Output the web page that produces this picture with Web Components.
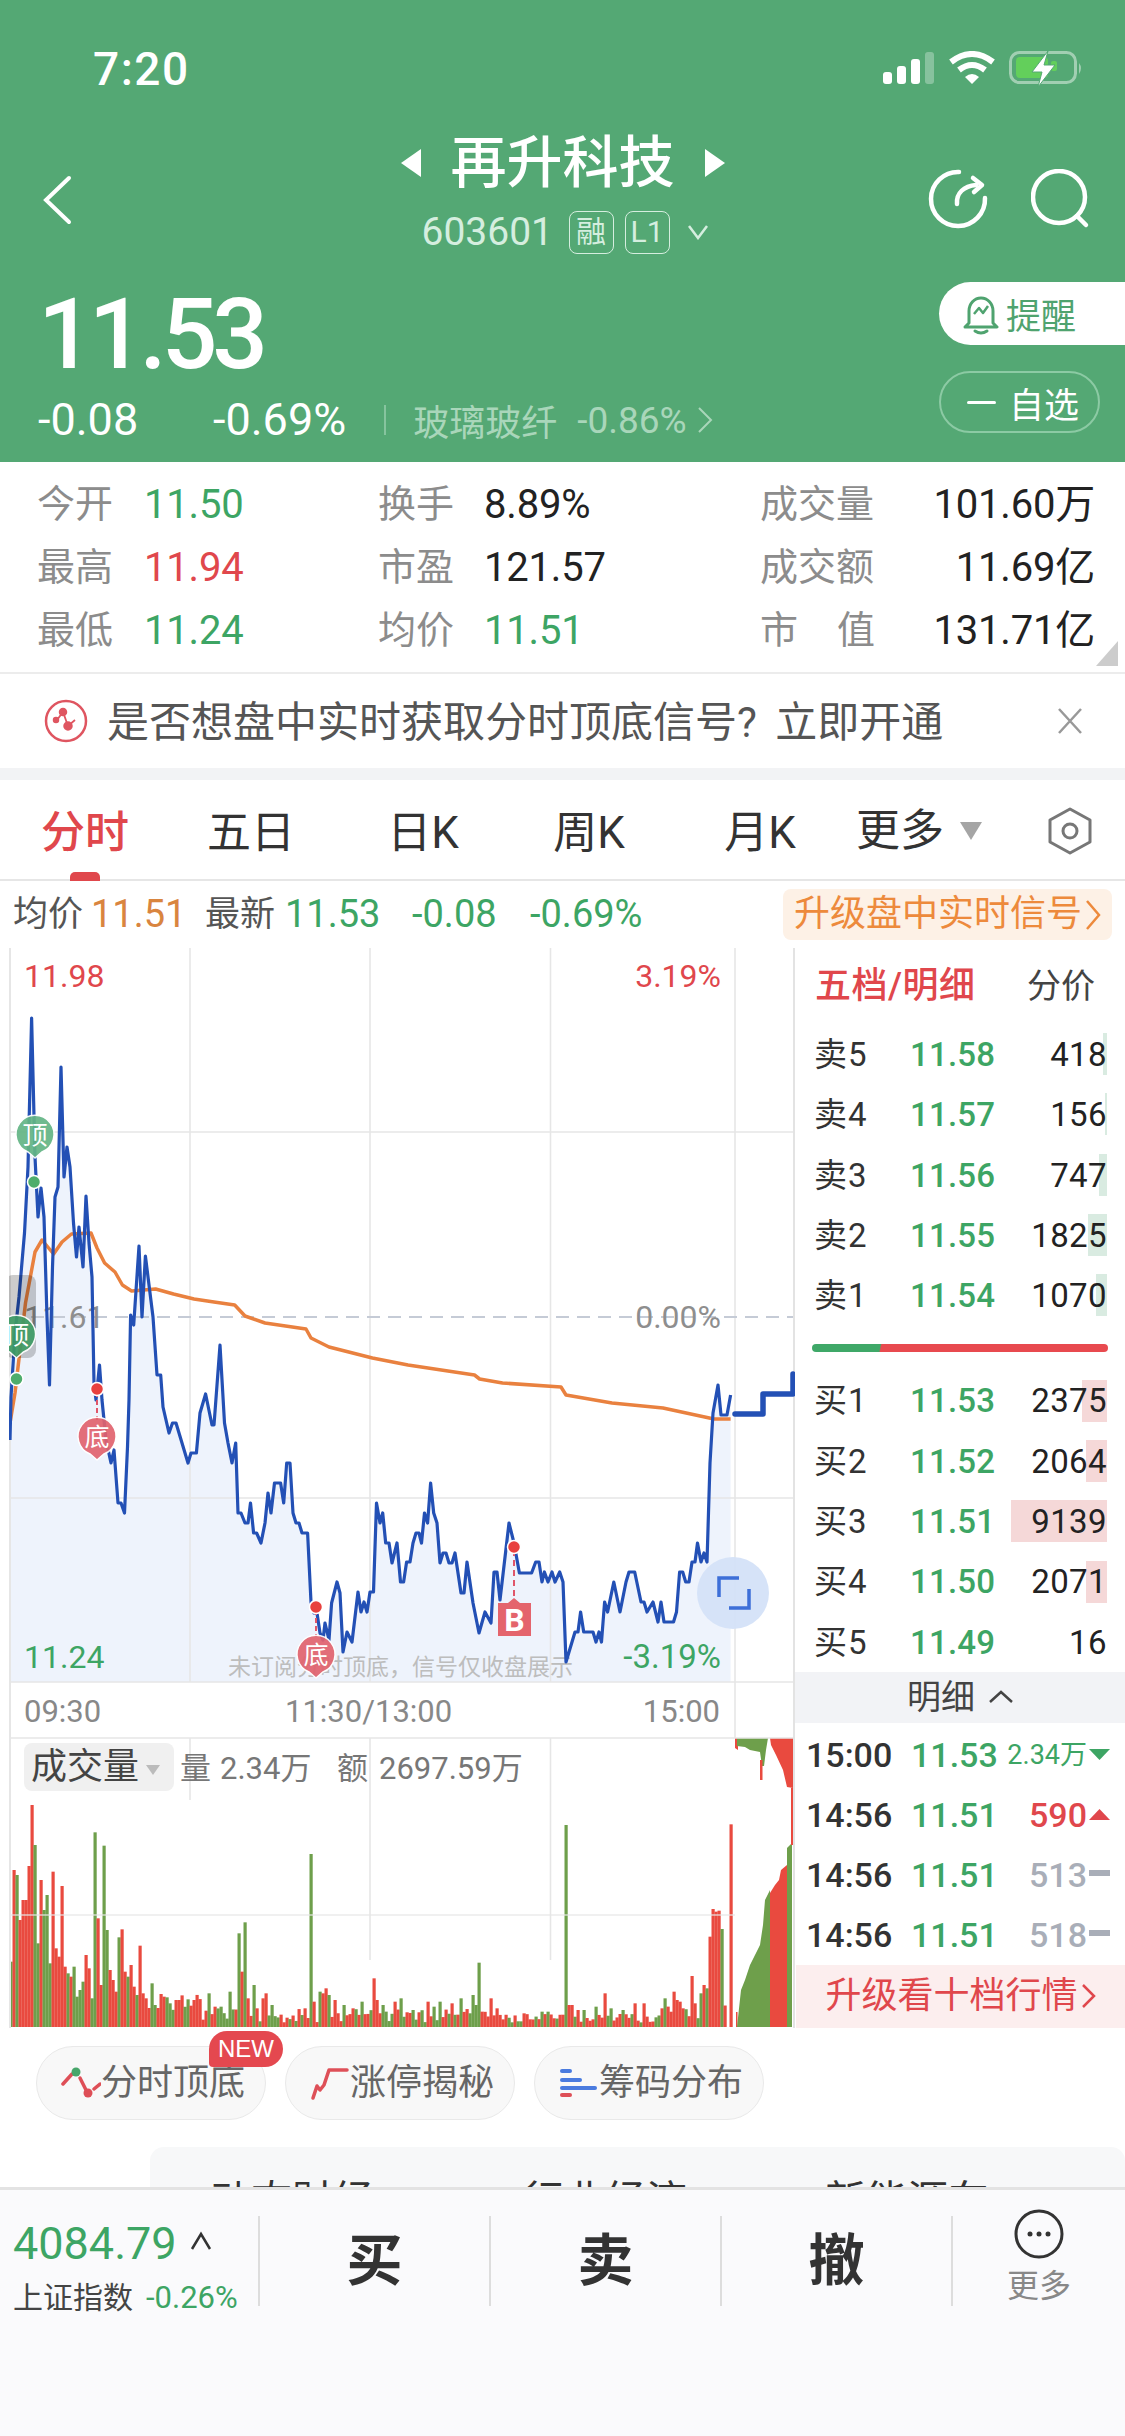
<!DOCTYPE html>
<html lang="zh">
<head>
<meta charset="utf-8">
<title>再升科技</title>
<style>
html,body{margin:0;padding:0;background:#fff}
body{width:1125px;height:2436px;overflow:hidden;display:flex;flex-direction:column;font-family:Roboto,"Noto Sans CJK SC",sans-serif;color:#333}
sl-scroll{flex:1 1 auto;min-height:0}
</style>
</head>
<body>
<sl-scroll>
  <sl-header></sl-header>
  <sl-stats>
    <sl-stat label="今开" value="11.50" tone="g"></sl-stat>
    <sl-stat label="换手" value="8.89%" gap="30"></sl-stat>
    <sl-stat label="成交量" value="101.60万" end></sl-stat>
    <sl-stat label="最高" value="11.94" tone="r"></sl-stat>
    <sl-stat label="市盈" value="121.57" gap="30"></sl-stat>
    <sl-stat label="成交额" value="11.69亿" end></sl-stat>
    <sl-stat label="最低" value="11.24" tone="g"></sl-stat>
    <sl-stat label="均价" value="11.51" tone="g" gap="30"></sl-stat>
    <sl-stat label="市 值" value="131.71亿" end spread></sl-stat>
  </sl-stats>
  <sl-notice>是否想盘中实时获取分时顶底信号? 立即开通</sl-notice>
  <sl-tabs></sl-tabs>
  <sl-info></sl-info>
  <sl-main>
    <sl-chart slot="chart"></sl-chart>
    <sl-book slot="book"></sl-book>
  </sl-main>
  <sl-chips>
    <sl-chip icon="signal" new>分时顶底</sl-chip>
    <sl-chip icon="limit">涨停揭秘</sl-chip>
    <sl-chip icon="chips">筹码分布</sl-chip>
  </sl-chips>
  <sl-card>
    <span>动态财经</span><span>行业经济</span><span style="margin-left:-11px">新能源车</span>
  </sl-card>
</sl-scroll>
<sl-bar></sl-bar>

<script>
const FONT = 'Roboto,"Noto Sans CJK SC",sans-serif';
class Base extends HTMLElement {
  constructor(){ super(); this.attachShadow({mode:'open'}); }
  connectedCallback(){ this.shadowRoot.innerHTML = this.render(); }
}
const G='#3DA564', R='#E0474C';

customElements.define('sl-scroll', class extends Base {
  render(){ return `<style>:host{display:block;overflow:hidden;height:2187px}</style><slot></slot>`; }
});

customElements.define('sl-header', class extends Base {
  render(){ return `<style>
  :host{display:block;height:462px;background:#54A874;color:#fff;box-sizing:border-box;overflow:hidden}
  .status{height:62px;padding-top:38px;display:flex;align-items:center;justify-content:space-between;padding-left:93px;padding-right:42px}
  .time{font-size:46px;font-weight:500;letter-spacing:1.5px;line-height:62px}
  .sicons{display:block}
  .nav{height:145px;margin-top:25px;display:grid;grid-template-columns:1fr auto 1fr}
  .back{padding:50px 0 0 42px}
  .mid{display:flex;flex-direction:column;align-items:center}
  .title{display:flex;align-items:center;gap:30px;height:64px;margin-top:6px;font-size:56px;font-weight:500;line-height:64px}
  .sub{display:flex;align-items:center;height:44px;margin-top:15px;margin-left:5px;color:#D5EEDF;font-size:39px}
  .badge{box-sizing:border-box;height:43px;width:45px;border:1.5px solid #D5EEDF;border-radius:8px;display:flex;align-items:center;justify-content:center;font-size:30px;line-height:1}
  .right{display:flex;justify-content:flex-end;gap:42px;padding:44px 30px 0 0}
  .low{display:flex;justify-content:space-between;margin-top:0}
  .q{padding-left:38px}
  .price{font-size:98px;font-weight:500;line-height:88px;letter-spacing:-5px;height:88px;margin-top:21px}
  .ch{display:flex;align-items:center;height:44px;margin-top:19px}
  .ch b{font-weight:400;font-size:45px;line-height:44px}
  .ind{color:#A9D6BA;font-size:36px;display:flex;align-items:center;white-space:nowrap}
  .sep{width:2px;height:30px;background:#86C49E;margin:0 27px 0 38px}
  .acts{display:flex;flex-direction:column;align-items:flex-end;gap:26px;padding-top:12px}
  .remind{width:186px;height:63px;background:#fff;border-radius:32px 0 0 32px;color:#4FA36F;font-size:35px;display:flex;align-items:center;padding-left:24px;box-sizing:border-box;gap:7px}
  .star{box-sizing:border-box;width:161px;height:62px;margin-right:25px;border:2px solid #8CCAA4;border-radius:31px;display:flex;align-items:center;padding-left:26px;gap:13px;font-size:35px}
  .star i{display:block;width:29px;height:3px;background:#fff;border-radius:2px}
  </style>
  <div class="status">
    <span class="time">7:20</span>
    <svg class="sicons" width="200" height="36" viewBox="0 0 200 36">
      <g fill="#fff"><rect x="0" y="21" width="9" height="12" rx="3"/><rect x="14" y="15" width="9" height="18" rx="3"/><rect x="28" y="8" width="9" height="25" rx="3"/></g>
      <rect x="42" y="1" width="9" height="32" rx="3" fill="#fff" opacity=".3"/>
      <g fill="none" stroke="#fff" stroke-width="6"><path d="M68 11 Q89 -5 110 11"/><path d="M76 19 Q89 9 102 19"/></g>
      <path d="M82 26 Q89 20 96 26 L89 33Z" fill="#fff"/>
      <rect x="127.500" y="1.500" width="65" height="30" rx="9" fill="none" stroke="#fff" stroke-opacity=".45" stroke-width="3"/>
      <rect x="133" y="6" width="32" height="21" rx="4" fill="#63CF5B"/>
      <rect x="168" y="10" width="6" height="10" rx="2" fill="#63CF5B"/>
      <path d="M196 12 Q200 17 196 23Z" fill="#fff" opacity=".45"/>
      <path d="M165 0 L149 21 H159 L155 36 L172 14 H161Z" fill="#fff" stroke="#54A874" stroke-width="1"/>
    </svg>
  </div>
  <div class="nav">
    <div class="back"><svg width="32" height="50" viewBox="0 0 32 50"><path d="M27 3 L4 25 L27 47" fill="none" stroke="#fff" stroke-width="4" stroke-linecap="round"/></svg></div>
    <div class="mid">
      <div class="title">
        <svg width="20" height="28" viewBox="0 0 20 28"><path d="M20 0 V28 L0 14Z" fill="#fff"/></svg>
        <span>再升科技</span>
        <svg width="20" height="28" viewBox="0 0 20 28"><path d="M0 0 V28 L20 14Z" fill="#fff"/></svg>
      </div>
      <div class="sub">
        <span style="width:147px">603601</span>
        <span class="badge">融</span>
        <span class="badge" style="margin-left:11px">L1</span>
        <svg width="22" height="16" viewBox="0 0 22 16" style="margin-left:17px"><path d="M2 2 L11 14 L20 2" fill="none" stroke="#D5EEDF" stroke-width="2.500"/></svg>
      </div>
    </div>
    <div class="right">
      <svg width="62" height="62" viewBox="0 0 62 62" fill="none" stroke="#fff" stroke-width="4.500" stroke-linecap="round" stroke-linejoin="round"><path d="M32 3 A27 27 0 1 0 58 29"/><path d="M30 35 C29 24 37 17 49 16"/><path d="M46 9 L55 16 L47 23"/></svg>
      <svg width="64" height="64" viewBox="0 0 64 64" fill="none" stroke="#fff" stroke-width="4.500" stroke-linecap="round"><circle cx="28" cy="28" r="26"/><path d="M46 47 L55 56"/></svg>
    </div>
  </div>
  <div class="low">
    <div class="q">
      <div class="price">11.53</div>
      <div class="ch"><b style="width:175px">-0.08</b><b>-0.69%</b><span class="sep"></span><span class="ind">玻璃玻纤<span style="margin-left:20px;font-size:37px">-0.86%</span>
        <svg width="16" height="28" viewBox="0 0 16 28" style="margin-left:10px"><path d="M2 2 L14 14 L2 26" fill="none" stroke="#A9D6BA" stroke-width="2"/></svg></span></div>
    </div>
    <div class="acts">
      <div class="remind">
        <svg width="36" height="42" viewBox="0 0 36 42" fill="none" stroke="#4FA36F" stroke-width="3" stroke-linejoin="round"><path d="M6 30 V18 A12 13 0 0 1 30 18 V30 L34 34 H2Z"/><path d="M11 21 L16 15 L20 20 L25 13" stroke-width="2.500"/><path d="M12 38 Q18 42 24 38" stroke-linecap="round"/></svg>
        <span>提醒</span>
      </div>
      <div class="star"><i></i><span>自选</span></div>
    </div>
  </div>`; }
});

customElements.define('sl-stats', class extends Base {
  render(){ return `<style>
  :host{display:grid;position:relative;box-sizing:border-box;height:212px;padding:11px 30px 10px 37px;grid-template-columns:341px 382px 1fr;grid-auto-rows:63px;border-bottom:2px solid #ececec;align-items:center}
  :host::after{content:"";position:absolute;right:7px;bottom:6px;width:22px;height:25px;background:#ccc;clip-path:polygon(100% 0,100% 100%,0 100%)}
  </style><slot></slot>`; }
});
customElements.define('sl-stat', class extends Base {
  render(){
    const tone={g:G,r:R}[this.getAttribute('tone')]||'#222';
    const gap=this.getAttribute('gap')||31;
    const end=this.hasAttribute('end');
    const l=this.getAttribute('label');
    const labelHtml=this.hasAttribute('spread')
      ? `<span style="display:flex;justify-content:space-between;width:115px"><span>市</span><span>值</span></span>`
      : `<span>${l}</span>`;
    return `<style>
    :host{display:flex;align-items:center;height:63px;justify-content:${end?'space-between':'flex-start'}}
    .l{color:#8C8C8C;font-size:38px;line-height:63px;margin-right:${end?0:gap}px}
    .v{color:${tone};font-size:40px;line-height:63px;letter-spacing:-.2px}
    </style><span class="l">${labelHtml}</span><span class="v">${this.getAttribute('value')}</span>`; }
});

customElements.define('sl-notice', class extends Base {
  render(){ return `<style>
  :host{display:flex;align-items:center;height:94px;padding:0 42px 0 44px;background:#fff;border-bottom:12px solid #F2F3F5;font-size:42px;color:#555;word-spacing:8px}
  .t{flex:1;margin-left:19px;line-height:94px;white-space:nowrap;padding-top:4px}
  </style>
  <svg width="44" height="44" viewBox="0 0 44 44" fill="none" stroke="#DF5560" stroke-width="2.500"><circle cx="22" cy="22" r="20"/><path d="M13 21 L19 13 L24 27 L31 21" stroke-width="1.800"/><circle cx="19" cy="13" r="3" fill="#DF5560"/><circle cx="24" cy="27" r="3.500" fill="#DF5560"/><circle cx="12" cy="21" r="2" fill="#DF5560"/></svg>
  <span class="t"><slot></slot></span>
  <svg width="26" height="28" viewBox="0 0 26 28"><path d="M2 2 L24 26 M24 2 L2 26" stroke="#999" stroke-width="2.500" fill="none"/></svg>`; }
});

customElements.define('sl-tabs', class extends Base {
  render(){
    const tab=(t,on)=>`<div class="${on?'tab on':'tab'}">${t}</div>`;
    return `<style>
    :host{display:grid;position:relative;grid-template-columns:170px 162px 182px 150px 192px 152px 1fr;height:99px;border-bottom:2px solid #E6E6E6;align-items:center;font-size:44px;color:#333}
    .tab{text-align:center;line-height:102px;height:99px;position:relative}
    .on{color:${R};font-weight:500}
    .on::after{content:"";position:absolute;left:70px;bottom:0;width:30px;height:9px;background:${R};border-radius:5px 5px 0 0}
    .more{display:flex;align-items:center;gap:16px;white-space:nowrap;line-height:102px}
    </style>
    ${tab('分时',1)}${tab('五日')}${tab('日K')}${tab('周K')}${tab('月K')}
    <div class="more"><span>更多</span><svg width="22" height="18" viewBox="0 0 22 18"><path d="M0 0 H22 L11 18Z" fill="#A5A5A5"/></svg></div>
    <div style="display:flex;justify-content:center;padding-left:6px"><svg width="46" height="48" viewBox="0 0 46 48" fill="none" stroke="#777" stroke-width="3"><path d="M23 2 L43 13 V35 L23 46 L3 35 V13Z" stroke-linejoin="round"/><circle cx="23" cy="24" r="7"/></svg></div>`; }
});

customElements.define('sl-info', class extends Base {
  render(){ return `<style>
  :host{display:flex;align-items:center;height:67px;padding-left:13px;box-sizing:border-box;font-size:35px;line-height:73px;color:#555;white-space:nowrap}
  .btn{margin-left:auto;margin-right:13px;width:329px;height:51px;background:#FDF1E6;border-radius:8px;color:#ED8A3C;display:flex;align-items:center;justify-content:center;gap:3px;font-size:36px;line-height:51px}
  span{display:inline-block}
  .n{font-size:38px}
  </style>
  <span style="width:78px">均价</span><span class="n" style="color:#D9853F;width:114px">11.51</span>
  <span style="width:80px">最新</span><span class="n" style="color:${G};width:127px">11.53</span>
  <span class="n" style="color:${G};width:118px">-0.08</span><span class="n" style="color:${G}">-0.69%</span>
  <div class="btn"><span>升级盘中实时信号</span><svg width="16" height="32" viewBox="0 0 16 32"><path d="M2 2 L14 16 L2 30" fill="none" stroke="#ED8A3C" stroke-width="2.500"/></svg></div>`; }
});

customElements.define('sl-main', class extends Base {
  render(){ return `<style>:host{display:grid;grid-template-columns:786px 330px;padding-left:9px;height:1080px}</style><slot name="chart"></slot><slot name="book"></slot>`; }
});

const PRICE=[[10,1440],[11,1397],[15,1333],[19,1297],[24.5,1233],[28,1167],[31.6,1018],[35,1157],[38,1217],[41,1188],[44,1217],[47,1317],[49.5,1385],[52.5,1267],[55,1197],[58,1187],[61,1067],[64,1177],[67,1147],[70,1167],[73.5,1223],[76.5,1257],[79,1227],[83,1267],[86,1196],[89,1243],[92,1277],[94,1383],[96,1400],[99.5,1365],[102,1400],[106,1440],[111,1463],[114,1450],[118,1503],[121,1503],[124.5,1513],[127.5,1447],[129,1400],[130.6,1315],[133.7,1325],[139,1246],[142,1317],[145.4,1256],[153,1317],[157,1375],[160.7,1375],[163,1407],[169,1433],[172.5,1423],[176,1423],[188,1463],[191,1453],[196.4,1453],[200,1413],[205.6,1394],[212,1425],[214,1425],[220,1345],[224.5,1423],[228,1443],[232,1463],[235.7,1443],[238,1513],[241,1513],[245,1523],[248,1523],[250.5,1503],[253.6,1533],[256.6,1533],[261,1543],[265,1523],[268,1493],[271,1513],[274.5,1483],[280.6,1483],[283.7,1503],[286.7,1463],[290,1463],[293,1513],[296,1523],[299,1523],[302,1533],[307.6,1533],[311,1602],[314,1613],[317,1613],[320,1633],[323,1640],[325,1623],[329,1640],[331.6,1603],[337,1582],[340,1593],[343,1652],[347,1632],[352,1642],[358,1592],[361,1612],[364,1602],[367,1612],[370,1592],[373.5,1592],[376.5,1503],[380,1523],[382.7,1513],[385.7,1543],[389,1543],[392,1563],[397,1543],[400.5,1582],[403.6,1582],[406.6,1562],[410,1562],[413,1543],[416,1533],[419,1533],[421.5,1543],[424.5,1513],[427.6,1523],[430.6,1483],[433.7,1513],[437,1523],[440,1563],[443,1553],[446,1553],[449,1563],[452,1563],[455,1553],[461,1593],[464,1593],[467,1562],[473,1603],[479,1633],[485,1612],[491,1623],[494,1572],[497,1572],[500,1600],[509,1523],[514,1543],[519.4,1573],[531.6,1573],[535.7,1562],[539,1562],[542,1582],[544.4,1572],[548,1582],[552,1572],[555,1582],[559.7,1572],[563,1582],[566,1662],[575,1632],[578,1632],[580.6,1612],[583.7,1632],[593,1632],[596,1642],[599,1632],[601.5,1642],[604.6,1602],[607.6,1612],[613.8,1582],[620,1612],[626,1582],[629,1572],[634.7,1572],[641,1602],[644,1602],[647,1612],[653,1602],[658,1622],[661,1602],[664,1622],[673.5,1622],[676.5,1612],[679.6,1572],[682.7,1572],[685.7,1582],[689,1582],[692,1562],[695,1562],[697.5,1543],[701,1562],[704,1553],[707,1562],[710,1463],[713,1413],[718,1385],[721,1415],[727,1415],[730.6,1395]];
const AVG=[[10,1423],[15,1393],[25.5,1303],[35,1252],[42,1240],[53.6,1254],[62,1242],[71.4,1234],[91,1233],[97,1248],[104.6,1263],[115,1272],[122.4,1285],[131.6,1291],[155.6,1289],[173.5,1294],[194,1299],[214,1302],[234.7,1305],[245,1316],[265,1323],[306,1329],[311,1338],[329,1347],[372.4,1358],[408,1365],[474.5,1375],[479.6,1379],[502.5,1383],[561,1387],[566,1395],[612,1403],[663,1408],[714,1419],[730.6,1419]];
const KEY=[[20,785,'g'],[25,510,'r'],[30,525,'g'],[38,660,'r'],[44,600,'r'],[50,600,'r'],[56,498,'r'],[62,315,'r'],[68,435,'g'],[74,730,'g'],[80,540,'r'],[86,630,'g'],[92,585,'g'],[97,790,'g'],[103,515,'r'],[109,745,'r'],[115,770,'r'],[120,558,'r'],[126,800,'r'],[132,820,'g'],[138,830,'r'],[144,800,'g'],[150,890,'g'],[156,870,'g'],[162,845,'g'],[168,765,'r'],[174,805,'r'],[180,895,'g'],[185,397,'g'],[191,655,'r'],[197,855,'r'],[203,437,'g'],[209,690,'g'],[215,810,'r'],[221,840,'r'],[227,875,'r'],[232,712,'g'],[238,688,'r'],[244,815,'r'],[250,830,'g'],[256,795,'r'],[262,860,'r'],[268,885,'g'],[273,737,'r'],[279,880,'r'],[285,895,'r'],[296,850,'g'],[302,915,'g'],[314,882,'r'],[320,890,'r'],[326,892,'g'],[332,910,'g'],[344,900,'r'],[350,900,'r'],[367,898,'g'],[380,900,'r'],[408,880,'g'],[420,920,'r'],[432,920,'g'],[449,875,'g'],[467,700,'g'],[473,815,'r'],[479,667,'g'],[485,895,'r'],[497,855,'g'],[502,925,'r'],[514,895,'r'],[520,880,'r'],[532,915,'g'],[597,925,'r'],[608,462,'g'],[614,905,'r'],[626,875,'g'],[632,880,'r'],[637,865,'r'],[643,885,'g'],[655,900,'r'],[672,915,'g'],[690,925,'r'],[708,905,'g'],[732,835,'r'],[738,900,'r'],[749,915,'g'],[773,905,'r'],[785,895,'g'],[808,930,'g'],[838,905,'r'],[850,920,'g'],[860,905,'g'],[885,910,'r'],[903,895,'g'],[926,885,'g'],[932,915,'g'],[938,788,'g'],[943,935,'r'],[960,895,'r'],[1024,940,'r'],[1062,935,'g'],[1073,935,'g'],[1108,375,'g'],[1113,915,'r'],[1120,915,'r'],[1132,930,'r'],[1144,930,'g'],[1167,920,'g'],[1185,880,'r'],[1197,925,'g'],[1220,930,'g'],[1244,910,'r'],[1261,910,'r'],[1296,925,'r'],[1302,895,'g'],[1320,875,'r'],[1326,900,'r'],[1332,905,'r'],[1338,925,'r'],[1356,828,'r'],[1362,910,'r'],[1373,880,'g'],[1379,855,'r'],[1385,865,'g'],[1391,710,'r'],[1397,627,'r'],[1403,635,'r'],[1409,632,'r'],[1415,687,'g'],[1432,373,'r']];
function volBars(){
  const VR='#E94A3F', VG='#6E9F4B';
  const map={};
  KEY.forEach(([zx,zy,c])=>{map[Math.round((zx-19)/5.88)]=[1700+zy/3,c];});
  let s=7, out='';
  const rnd=()=>{s=(s*9301+49297)%233280;return s/233280;};
  for(let i=0;i<241;i++){
    let x=9.5+i*3, e=map[i], y, c;
    const a=rnd(), b=rnd();
    if(x>724&&!e) continue;
    if(e){y=e[0];c=e[1];}
    else{
      const lo = x<100?800 : x<200?880 : x<500?925 : x<660?942 : 915;
      const hi = x<100?900 : x<200?955 : 968;
      y=1700+(lo+a*(hi-lo))/3;
      c=b<(x>560?.72:.6)?'r':'g';
    }
    out+=`<rect x="${x}" y="${y}" width="3.2" height="${2027-y}" fill="${c==='r'?VR:VG}"/>`;
  }
  return out+
  `<polygon fill="${VR}" points="735,1738 738,1738 738,1750 735,1748"/>
   <polygon fill="${VG}" points="737,1738 768,1738 766,1750 764,1766 762,1766 760,1752 750,1750 745,1747 737,1746"/>
   <rect x="760" y="1760" width="2.500" height="20" fill="${VR}"/>
   <polygon fill="${VR}" points="770,1738 793,1738 793,1788 787,1787 783,1770 776,1755 771,1745"/>
   <rect x="736" y="2012" width="1.500" height="15" fill="${VR}"/>
   <polygon fill="${VG}" points="737,2027 741,1990 745,1980 750,1965 755,1955 760,1945 763,1925 765,1900 770,1890 772,2027"/>
   <polygon fill="${VR}" points="770,2027 770,1893 775,1885 779,1880 781,1870 787,1865 787,2027"/>
   <polygon fill="${VG}" points="787,2027 787,1848 792,1843 792,2027"/>
   <rect x="791" y="1788" width="2" height="57" fill="${VR}"/>`;
}
const pin=(cx,cy,t,fill,r=19)=>`<g opacity=".92"><path d="M${cx} ${cy+r+4} L${cx-7} ${cy+r-2} A${r} ${r} 0 1 1 ${cx+7} ${cy+r-2}Z" fill="${fill}" stroke="#fff" stroke-width="1.500"/></g><text x="${cx}" y="${cy+9}" text-anchor="middle" font-size="25" fill="#fff">${t}</text>`;
const dot=(cx,cy,c)=>`<circle cx="${cx}" cy="${cy}" r="6.500" fill="${c}" stroke="#fff" stroke-width="1.500"/>`;

customElements.define('sl-chart', class extends Base {
  render(){
    const pts=PRICE.map(p=>p.join(',')).join(' ');
    const avg=AVG.map(p=>p.join(',')).join(' ');
    const GRID='#E6E6E6';
    return `<style>:host{display:block;width:786px;height:1080px}svg{display:block;font-family:${FONT}}</style>
    <svg width="786" height="1080" viewBox="9 948 786 1080">
      <rect x="9" y="948" width="786" height="1080" fill="#fff"/>
      <polygon points="10,1682 ${pts} 730.6,1682" fill="#EEF3FC"/>
      ${volBars()}
      <g stroke="${GRID}" stroke-width="1.600">
        <path d="M190 948 V1682 M370 948 V1682 M550.5 948 V1682 M190 1738 V1800 M370 1738 V1960 M550.5 1738 V1960 M735 948 V1738" fill="none"/>
        <path d="M10 1132 H793 M10 1498 H793 M9 1682 H793 M9 1738 H793" fill="none"/>
        <path d="M10 1915 H735" fill="none" stroke-opacity=".8"/>
      </g>
      <path d="M10 948 V2028" stroke="${GRID}" stroke-width="2" fill="none"/>
      <path d="M794 948 V2028" stroke="#E3E3E3" stroke-width="2" fill="none"/>
      <path d="M10 1317 H793" stroke="#C5CBD6" stroke-width="2" stroke-dasharray="13 8" fill="none"/>

      <g font-size="32">
        <text x="24" y="987" fill="${R}">11.98</text>
        <text x="721" y="987" text-anchor="end" fill="${R}">3.19%</text>
        <text x="24" y="1328" fill="#8E8E8E">11.61</text>
        <text x="721" y="1328" text-anchor="end" fill="#8E8E8E">0.00%</text>
        <text x="24" y="1668" fill="${G}">11.24</text>
        <text x="721" y="1668" text-anchor="end" fill="${G}" font-size="33">-3.19%</text>
      </g>
      <text x="228" y="1675" font-size="23" fill="#BDBDBD">未订阅分时顶底&#xFF0C;信号仅收盘展示</text>

      <polyline points="${avg}" fill="none" stroke="#E9813F" stroke-width="3.500" stroke-linejoin="round"/>
      <polyline points="${pts}" fill="none" stroke="#2350B5" stroke-width="3.200" stroke-linejoin="round"/>
      <path d="M735 1414 H763 V1394 H793 V1374" fill="none" stroke="#2350B5" stroke-width="5.500" stroke-linejoin="round" stroke-linecap="round"/>

      <rect x="5" y="1275" width="31" height="83" rx="8" fill="#000" fill-opacity=".2"/>
      ${pin(35,1135,'顶','#63B585')}${dot(34,1182,'#4EAD6C')}
      ${pin(16.5,1335,'顶','#3F9C66')}${dot(16.5,1379,'#4EAD6C')}
      <path d="M97 1392 V1420" stroke="#E0566A" stroke-width="2" stroke-dasharray="5 3" fill="none"/>
      ${pin(97,1437,'底','#E1636E')}${dot(97,1389,'#E8413E')}
      <path d="M316 1610 V1636" stroke="#E0566A" stroke-width="2" stroke-dasharray="5 3" fill="none"/>
      ${pin(316,1655,'底','#E1636E')}${dot(316,1607,'#E8413E')}
      <path d="M514 1550 V1603" stroke="#E0566A" stroke-width="2" stroke-dasharray="6 4" fill="none"/>
      <path d="M498 1603 H508 L514 1598 L520 1603 H531 V1636 H498Z" fill="#E4646C"/>
      <text x="514.500" y="1631" text-anchor="middle" font-size="32" font-weight="700" fill="#fff">B</text>
      ${dot(514,1547,'#E8413E')}

      <ellipse cx="733" cy="1593" rx="36" ry="36" fill="#D4E1F8" fill-opacity=".95"/>
      <path d="M719 1597 V1578 H739 M749 1589 V1608 H729" fill="none" stroke="#3D6FD8" stroke-width="3.500"/>

      <g font-size="31" fill="#888">
        <text x="24" y="1722">09:30</text>
        <text x="285" y="1722">11:30/13:00</text>
        <text x="720" y="1722" text-anchor="end">15:00</text>
      </g>

      <rect x="24" y="1743" width="150" height="48" rx="8" fill="#F0F0F0"/>
      <text x="31" y="1779" font-size="36" fill="#444">成交量</text>
      <path d="M146 1765 H160 L153 1775Z" fill="#BBB"/>
      <g font-size="31" fill="#777">
        <text x="180" y="1779">量</text><text x="220" y="1779">2.34万</text>
        <text x="337" y="1779">额</text><text x="379" y="1779">2697.59万</text>
      </g>
    </svg>`; }
});

customElements.define('sl-level', class extends Base {
  render(){
    const w=+this.getAttribute('w')||0, side=this.getAttribute('side');
    const tint=side==='b'?'#F5D8D8':'#D9EBE1';
    return `<style>
    :host{display:grid;grid-template-columns:96px 1fr auto;align-items:center;height:60.3px;padding:0 18px 0 19px;box-sizing:border-box;
      background:linear-gradient(${tint},${tint}) no-repeat;background-size:${w}px 42px;background-position:right 18px center;font-size:33px;line-height:62px;color:#333}
    .p{color:${G};font-weight:500;letter-spacing:.2px}
    .v{font-weight:400;letter-spacing:.4px;color:#222}
    .l{letter-spacing:1px}
    </style><span class="l">${this.getAttribute('label')}</span><span class="p">${this.getAttribute('price')}</span><span class="v">${this.getAttribute('vol')}</span>`; }
});
customElements.define('sl-tick', class extends Base {
  render(){
    const c={g:G,r:R,n:'#A9AEB8'}[this.getAttribute('dir')];
    const d=this.getAttribute('dir');
    const ic=d==='g'?'M0 0 H21 L10.500 11Z':d==='r'?'M10.500 0 L21 11 H0Z':'M0 1 H21 V7 H0Z';
    return `<style>
    :host{display:grid;grid-template-columns:105px 1fr auto 21px;align-items:center;height:60px;padding:0 17px 0 11px;font-size:34px;line-height:60px;color:#333;box-sizing:border-box;font-weight:500}
    .v{color:${c};text-align:right;font-size:${this.hasAttribute('small')?27:34}px;font-weight:${this.hasAttribute('small')?400:500}}
    .p{color:${G}}
    svg{display:block;margin-left:2px}
    </style><span>${this.getAttribute('t')}</span><span class="p">${this.getAttribute('price')}</span><span class="v">${this.getAttribute('vol')}</span><svg width="21" height="11" viewBox="0 0 21 11"><path d="${ic}" fill="${c}"/></svg>`; }
});
customElements.define('sl-book', class extends Base {
  render(){
    const lv=(s,l,p,v,w)=>`<sl-level side="${s}" label="${l}" price="${p}" vol="${v}" w="${w}"></sl-level>`;
    return `<style>
    :host{display:flex;flex-direction:column;width:330px;height:1080px;background:#fff;overflow:hidden}
    .hd{display:flex;justify-content:space-between;height:76px;flex:none;align-items:center;padding:0 30px 0 20px;font-size:34px;line-height:76px;box-sizing:border-box}
    .hd b{color:${R};font-weight:500;font-size:36px;letter-spacing:.5px}
    .hd span{color:#444}
    .sp{height:45px;flex:none;display:flex;align-items:center;padding:0 17px}
    .sp div{flex:1;height:8.500px;border-radius:5px;background:linear-gradient(102deg,#3FA868 0 23%,#E84A4F 23.500% 100%)}
    .mx{flex:none;height:51px;margin:0 0 2px 0;background:#F2F3F6;display:flex;align-items:center;justify-content:center;gap:14px;font-size:34px;line-height:51px;color:#444}
    .up{flex:none;height:63px;margin-left:1px;background:#FCEEEE;color:${R};display:flex;align-items:center;justify-content:center;gap:2px;font-size:36px;line-height:63px}
    </style>
    <div class="hd"><b>五档/明细</b><span>分价</span></div>
    ${lv('s','卖5','11.58','418',4)}${lv('s','卖4','11.57','156',2)}${lv('s','卖3','11.56','747',8)}${lv('s','卖2','11.55','1825',19)}${lv('s','卖1','11.54','1070',11)}
    <div class="sp"><div></div></div>
    ${lv('b','买1','11.53','2375',25)}${lv('b','买2','11.52','2064',21)}${lv('b','买3','11.51','9139',96)}${lv('b','买4','11.50','2071',21)}${lv('b','买5','11.49','16',0)}
    <div class="mx"><span>明细</span><svg width="24" height="14" viewBox="0 0 24 14"><path d="M1 12 L12 2 L23 12" fill="none" stroke="#444" stroke-width="2.500"/></svg></div>
    <sl-tick t="15:00" price="11.53" vol="2.34万" dir="g" small></sl-tick>
    <sl-tick t="14:56" price="11.51" vol="590" dir="r"></sl-tick>
    <sl-tick t="14:56" price="11.51" vol="513" dir="n"></sl-tick>
    <sl-tick t="14:56" price="11.51" vol="518" dir="n"></sl-tick>
    <div class="up"><span>升级看十档行情</span><svg width="16" height="26" viewBox="0 0 16 26"><path d="M3 2 L14 13 L3 24" fill="none" stroke="${R}" stroke-width="2.500"/></svg></div>`; }
});

customElements.define('sl-chips', class extends Base {
  render(){ return `<style>:host{display:flex;gap:19px;padding:18px 0 0 36px;height:101px;box-sizing:content-box}</style><slot></slot>`; }
});
const ICONS={
  signal:`<svg width="40" height="36" viewBox="0 0 40 36" fill="none" stroke="#DE4F57" stroke-width="3.500" stroke-linecap="round"><path d="M2 19 L11 9"/><path d="M19 13 L25 25"/><path d="M33 24 L39 19"/><circle cx="15" cy="7" r="4.500" fill="#47A66A" stroke="none"/><circle cx="27" cy="28" r="4.500" fill="#DE4F57" stroke="none"/></svg>`,
  limit:`<svg width="40" height="36" viewBox="0 0 40 36" fill="none" stroke="#DE5058" stroke-width="3.500" stroke-linecap="round" stroke-linejoin="round"><path d="M3 33 L7 21 L10 25 L14 20 L19 5 H37"/></svg>`,
  chips:`<svg width="40" height="36" viewBox="0 0 40 36" fill="none" stroke="#4A7BDF" stroke-width="4" stroke-linecap="round"><path d="M3 6 H11"/><path d="M3 15 H21"/><path d="M3 23 H36"/><path d="M3 30 H11" stroke="#DE4F57"/></svg>`
};
customElements.define('sl-chip', class extends Base {
  render(){ return `<style>
  :host{display:flex;position:relative;box-sizing:border-box;width:230px;height:74px;background:#F8F8F8;border:1.500px solid #E9E9E9;border-radius:37px;align-items:center;padding-left:24px;gap:0;font-size:36px;color:#666;white-space:nowrap;line-height:70px}
  .new{position:absolute;left:172px;top:-16px;width:74px;height:36px;background:#E4484F;color:#fff;border-radius:18px 18px 18px 4px;font:24px/36px "Liberation Sans",sans-serif;text-align:center}
  </style>${ICONS[this.getAttribute('icon')]}<span><slot></slot></span>${this.hasAttribute('new')?'<span class="new">NEW</span>':''}`; }
});
customElements.define('sl-card', class extends Base {
  render(){ return `<style>
  :host{display:flex;margin-left:150px;height:200px;overflow:hidden;background:#F7F8F9;border-radius:14px 14px 0 0;padding:34px 0 0 60px;gap:149px;box-sizing:border-box;font-size:41px;color:#333;line-height:41px;white-space:nowrap}
  </style><slot></slot>`; }
});

customElements.define('sl-bar', class extends Base {
  render(){
    const act=t=>`<div class="act"><span>${t}</span></div>`;
    return `<style>
    :host{flex:none;display:flex;height:249px;box-sizing:border-box;border-top:3px solid #E3E3E3;background:#FAFAFC;padding-top:26px;align-items:flex-start}
    .idx{width:258px;padding-left:13px;box-sizing:border-box;height:90px}
    .top{display:flex;align-items:center;height:56px;color:${G};font-size:45px;line-height:56px}
    .top svg{margin-left:13px;margin-top:-6px}
    .sub{display:flex;height:52px;line-height:52px;align-items:center;font-size:30px;color:#444;white-space:nowrap}
    .sub b{font-weight:400;color:${G};margin-left:13px;font-size:31px}
    .act{width:231px;height:90px;box-sizing:border-box;border-left:2px solid #DDD;display:flex;align-items:center;justify-content:center;font-size:56px;font-weight:700;color:#333;line-height:84px}
    .act span{display:block;height:84px}
    .more{flex:1;height:90px;box-sizing:border-box;border-left:2px solid #DDD;display:flex;flex-direction:column;align-items:center;font-size:32px;color:#888;line-height:40px}
    .more svg{display:block;margin-top:-7px}
    .more span{margin-top:7px}
    </style>
    <div class="idx">
      <div class="top"><span>4084.79</span><svg width="22" height="20" viewBox="0 0 22 20"><path d="M2 18 L11 3 L20 18" fill="none" stroke="#333" stroke-width="2.500"/></svg></div>
      <div class="sub"><span>上证指数</span><b>-0.26%</b></div>
    </div>
    ${act('买')}${act('卖')}${act('撤')}
    <div class="more">
      <svg width="50" height="50" viewBox="0 0 50 50" fill="none" stroke="#333" stroke-width="3"><circle cx="25" cy="25" r="23"/><g fill="#333" stroke="none"><circle cx="16" cy="25" r="2.500"/><circle cx="25" cy="25" r="2.500"/><circle cx="34" cy="25" r="2.500"/></g></svg>
      <span>更多</span>
    </div>`; }
});
</script>
</body>
</html>
